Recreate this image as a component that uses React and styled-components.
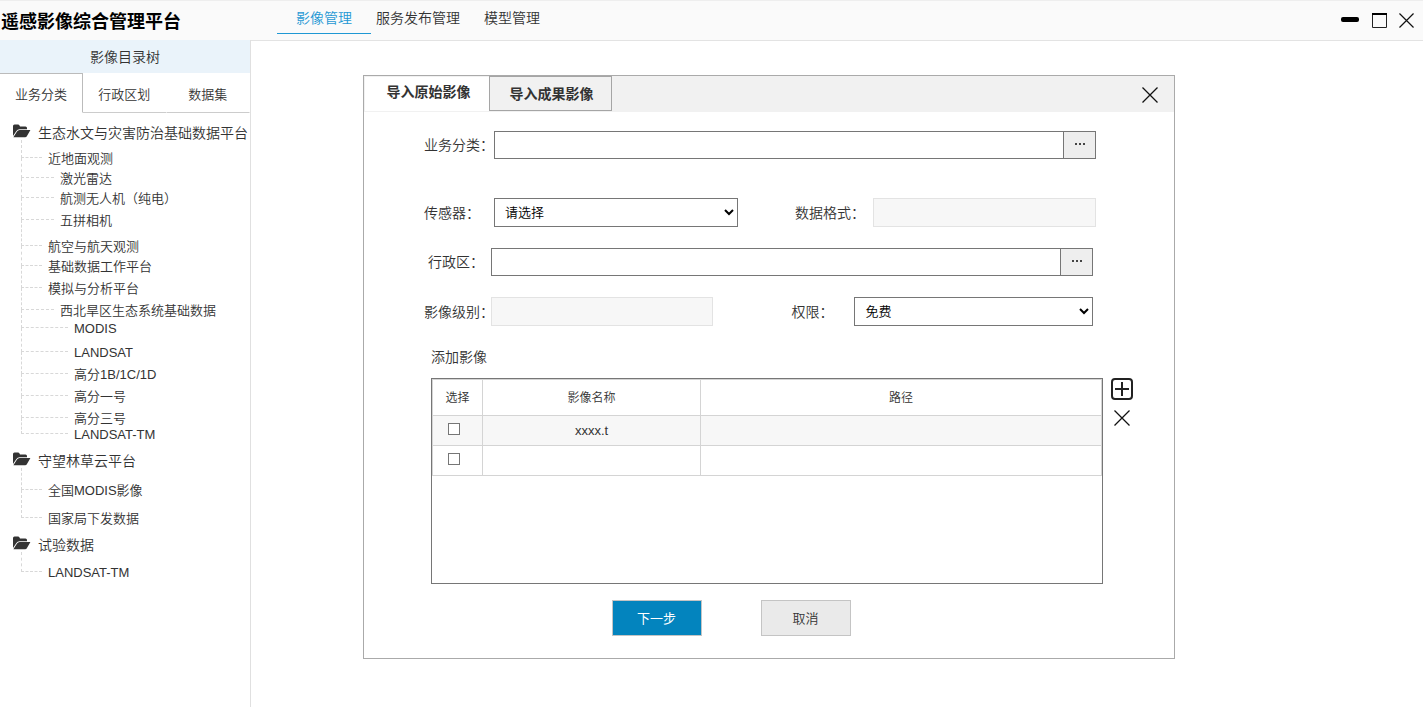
import React, { useState } from 'react';
import styled, { createGlobalStyle } from 'styled-components';

const GlobalStyle = createGlobalStyle`
    * {
        box-sizing: border-box;
    }

    body {
        margin: 0;
        background: #fff;
        color: #333;
        font-family: "Liberation Sans", "Noto Sans CJK SC", sans-serif;
        font-size: 14px;
        font-weight: 350;
        line-height: 20px;
    }

    button, input, select {
        font-family: inherit;
        font-weight: inherit;
        border-radius: 0;
    }
`;

const Page = styled.div`
    display: flex;
    flex-direction: column;
    min-height: 100vh;
`;

const Header = styled.header`
    display: flex;
    align-items: flex-start;
    height: 40px;
    background: #fafafa;
    border-top: 1px solid #eee;
`;

const Title = styled.h1`
    width: 277px;
    margin: 0;
    padding: 9px 0 0 1px;
    color: #000;
    font-size: 18px;
    line-height: 24px;
`;

const Nav = styled.nav`
    display: flex;
    flex: 1;
`;

const NavLink = styled.a`
    height: 33px;
    padding: ${({ $active }) => ($active ? '7px 19px 0' : '7px 12px 0')};
    margin-right: ${({ $active }) => ($active ? '-7px' : '0')};
    border-bottom: 1px solid ${({ $active }) => ($active ? '#1f98d4' : 'transparent')};
    color: ${({ $active }) => ($active ? '#1f98d4' : '#333')};
    text-decoration: none;
`;

const WindowButtons = styled.div`
    display: flex;
    gap: 12px;
    padding: 11px 9px 0 0;
`;

const IconButton = styled.button`
    display: flex;
    align-items: center;
    justify-content: center;
    padding: 0;
    border: 0;
    background: none;
    color: #111;
    cursor: pointer;
`;

const Body = styled.div`
    display: flex;
    flex: 1;
`;

const Sidebar = styled.aside`
    width: 251px;
    flex: none;
    border-right: 1px solid #e0e0e0;
`;

const SidebarTitle = styled.h2`
    margin: 0;
    padding: 7px 0 6px;
    background: #eaf3fa;
    font-size: 14px;
    font-weight: inherit;
    text-align: center;
`;

const SidebarTabs = styled.div`
    display: grid;
    grid-template-columns: 83px 1fr 1fr;
`;

const SidebarTab = styled.button`
    height: 40px;
    padding: 0;
    background: none;
    border: 1px solid transparent;
    border-bottom-color: ${({ $active }) => ($active ? 'transparent' : '#ccc')};
    border-top-color: ${({ $active }) => ($active ? '#bbb' : 'transparent')};
    border-right-color: ${({ $active }) => ($active ? '#bbb' : 'transparent')};
    border-left: 0;
    color: #333;
    font-size: 13px;
`;

const Tree = styled.ul`
    margin: 0;
    padding: 12px 0 0;
    list-style: none;
`;

const Folder = styled.li`
    margin-bottom: 10px;
`;

const FolderName = styled.div`
    display: flex;
    align-items: center;
    height: 16px;
    padding-left: 13px;
    gap: 7px;
    white-space: nowrap;

    svg {
        flex: none;
        margin-bottom: 4px;
    }
`;

const Branches = styled.ul`
    margin: 0;
    padding: 0 0 0 21px;
    list-style: none;
`;

const Leaf = styled.li`
    display: flex;
    gap: 6px;
    padding-top: ${({ $gap }) => $gap}px;
    font-size: 13px;
    line-height: 16px;
    white-space: nowrap;
`;

const lineWidth = { 1: '21px', 2: '33px', 3: '47px' };

const Line = styled.span`
    width: ${({ $level }) => lineWidth[$level]};
    height: ${({ $gap }) => $gap + 16}px;
    margin-top: ${({ $gap }) => -$gap - 9}px;
    border-left: 1px dashed #d8d8d8;
    border-bottom: 1px dashed #d8d8d8;

    ${Leaf}:first-child > & {
        height: ${({ $gap }) => $gap + 8}px;
        margin-top: ${({ $gap }) => -$gap - 1}px;
    }
`;

const Main = styled.main`
    flex: 1;
    min-width: 0;
    padding: 34px 248px 48px 112px;
    border-top: 1px solid #e3e3e3;
`;

const Dialog = styled.section`
    border: 1px solid #aaa;
`;

const DialogHeader = styled.div`
    display: flex;
    align-items: flex-start;
    height: 36px;
    background: #f1f1f1;
`;

const DialogTab = styled.button`
    width: ${({ $active }) => ($active ? '125px' : '123px')};
    height: ${({ $active }) => ($active ? '36px' : '35px')};
    padding: ${({ $active }) => ($active ? '0 0 6px 3px' : '0 0 2px 2px')};
    border: 1px solid ${({ $active }) => ($active ? '#f1f1f1' : '#a5a5a5')};
    border-right-width: ${({ $active }) => ($active ? '0' : '1px')};
    background: ${({ $active }) => ($active ? '#fff' : '#f1f1f1')};
    color: #333;
    font-size: 14px;
    font-weight: 700;
`;

const DialogClose = styled(IconButton)`
    margin: 11px 16px 0 auto;
`;

const Form = styled.form`
    padding: 19px 0 22px;
`;

const Row = styled.div`
    display: grid;
    grid-template-columns: ${({ $columns }) => $columns};
    align-items: center;
    margin-bottom: ${({ $gap }) => $gap || '21px'};
    padding: 0 ${({ $inset }) => ($inset ? '81px' : '78px')} 0 60px;
`;

const Label = styled.label`
    padding-left: ${({ $indent }) => $indent || '0'};
    white-space: nowrap;
`;

const Picker = styled.div`
    display: flex;
    height: 28px;
    border: 1px solid #767676;
`;

const PickerInput = styled.input`
    flex: 1;
    min-width: 0;
    padding: 0 8px;
    border: 0;
    outline: 0;
    font-size: 13px;
`;

const PickerButton = styled.button`
    width: 32px;
    padding: 0;
    border: 0;
    border-left: 1px solid #767676;
    background: #eee;
    color: #333;

    svg {
        display: block;
        margin: 0 auto 2px;
    }
`;

const Select = styled.select`
    width: 100%;
    height: 29px;
    padding: 0 6px;
    border: 1px solid #767676;
    background: #fff;
    color: #000;
    font-size: 13px;
`;

const ReadOnly = styled.input`
    width: 100%;
    height: 29px;
    border: 1px solid #e3e3e3;
    background: #f7f7f7;
`;

const Caption = styled.div`
    padding-left: 67px;
    margin-bottom: 11px;
`;

const ListArea = styled.div`
    display: flex;
    gap: 8px;
    padding: 0 41px 0 67px;
`;

const TableBox = styled.div`
    flex: 1;
    min-height: 206px;
    border: 1px solid #767676;
`;

const Table = styled.table`
    width: 100%;
    table-layout: fixed;
    border-collapse: collapse;
    text-align: center;

    th, td {
        padding: 0;
        border: 1px solid #d4d4d4;
    }

    th {
        height: 36px;
        font-size: 12px;
        font-weight: inherit;
    }

    th:nth-child(1) {
        width: 50px;
    }

    th:nth-child(2) {
        width: 218px;
    }

    td {
        height: 30px;
        font-size: 13px;
    }

    tbody tr:nth-child(odd) {
        background: #f7f7f7;
    }
`;

const Checkbox = styled.input`
    appearance: none;
    display: block;
    width: 12px;
    height: 12px;
    margin: 0 0 3px 15px;
    border: 1px solid #767676;
    background: #fff;

    &:checked {
        background: #0384be;
    }
`;

const ListTools = styled.div`
    display: flex;
    flex-direction: column;
    gap: 10px;
`;

const Actions = styled.div`
    display: flex;
    justify-content: center;
    gap: 59px;
    padding: 16px 76px 0 0;
`;

const ActionButton = styled.button`
    width: 90px;
    height: 36px;
    padding: 0 0 2px;
    border: 1px solid #c4c4c4;
    background: ${({ $primary }) => ($primary ? '#0384be' : '#eaeaea')};
    color: ${({ $primary }) => ($primary ? '#fff' : '#333')};
    font-size: 13px;
    font-weight: ${({ $primary }) => ($primary ? 400 : 'inherit')};
`;

const CrossIcon = ({ size }) => (
    <svg width={size} height={size} viewBox="0 0 16 16" fill="none" stroke="currentColor" strokeWidth="1.3">
        <path d="M0.5 0.5L15.5 15.5M15.5 0.5L0.5 15.5" />
    </svg>
);

const FolderIcon = () => (
    <svg width="18" height="14" viewBox="0 0 18 14" fill="#333">
        <path d="M0 12V2Q0 0.5 1.5 0.5H5Q6 0.5 6.5 1.5L7 2.5H12.5Q14 2.5 14 4V5.2H6.5Q4.5 5.2 3.4 7L0.3 11.6Z" />
        <path d="M6.6 5.9H17.4L14 12Q13.4 13.3 12 13.3H0.4L4 7.6Q5 5.9 6.6 5.9Z" />
    </svg>
);

const DotsIcon = () => (
    <svg width="10" height="2" viewBox="0 0 10 2" fill="#444">
        <rect width="2" height="2" />
        <rect x="4" width="2" height="2" />
        <rect x="8" width="2" height="2" />
    </svg>
);

const folders = [
    {
        name: '生态水文与灾害防治基础数据平台',
        items: [
            ['近地面观测', 1, 10],
            ['激光雷达', 2, 4],
            ['航测无人机（纯电）', 2, 4],
            ['五拼相机', 2, 6],
            ['航空与航天观测', 1, 10],
            ['基础数据工作平台', 1, 4],
            ['模拟与分析平台', 1, 6],
            ['西北旱区生态系统基础数据', 2, 6],
            ['MODIS', 3, 2],
            ['LANDSAT', 3, 8],
            ['高分1B/1C/1D', 3, 6],
            ['高分一号', 3, 6],
            ['高分三号', 3, 6],
            ['LANDSAT-TM', 3, 0],
        ],
    },
    {
        name: '守望林草云平台',
        items: [
            ['全国MODIS影像', 1, 14],
            ['国家局下发数据', 1, 12],
        ],
    },
    {
        name: '试验数据',
        items: [['LANDSAT-TM', 1, 12]],
    },
];

const files = [
    { name: 'xxxx.t', path: '' },
    { name: '', path: '' },
];

const sidebarTabs = ['业务分类', '行政区划', '数据集'];
const dialogTabs = ['导入原始影像', '导入成果影像'];

const App = () => {
    const [sideTab, setSideTab] = useState(0);
    const [dialogTab, setDialogTab] = useState(0);

    return (
        <Page>
            <GlobalStyle />
            <Header>
                <Title>遥感影像综合管理平台</Title>
                <Nav>
                    <NavLink href="#images" $active>影像管理</NavLink>
                    <NavLink href="#services">服务发布管理</NavLink>
                    <NavLink href="#models">模型管理</NavLink>
                </Nav>
                <WindowButtons>
                    <IconButton aria-label="最小化">
                        <svg width="20" height="16" viewBox="0 0 20 16">
                            <rect x="1" y="5" width="18" height="5" rx="2" fill="#000" />
                        </svg>
                    </IconButton>
                    <IconButton aria-label="最大化">
                        <svg width="15" height="16" viewBox="0 0 15 16">
                            <path d="M0.5 1.5V15.5H14.5V1.5" fill="none" stroke="#222" />
                            <rect y="1" width="15" height="2" fill="#000" />
                        </svg>
                    </IconButton>
                    <IconButton aria-label="关闭">
                        <CrossIcon size={15} />
                    </IconButton>
                </WindowButtons>
            </Header>
            <Body>
                <Sidebar>
                    <SidebarTitle>影像目录树</SidebarTitle>
                    <SidebarTabs>
                        {sidebarTabs.map((tab, i) => (
                            <SidebarTab key={tab} $active={i === sideTab} onClick={() => setSideTab(i)}>{tab}</SidebarTab>
                        ))}
                    </SidebarTabs>
                    <Tree>
                        {folders.map((folder) => (
                            <Folder key={folder.name}>
                                <FolderName>
                                    <FolderIcon />
                                    {folder.name}
                                </FolderName>
                                <Branches>
                                    {folder.items.map(([name, level, gap]) => (
                                        <Leaf key={name} $gap={gap}>
                                            <Line $level={level} $gap={gap} />
                                            {name}
                                        </Leaf>
                                    ))}
                                </Branches>
                            </Folder>
                        ))}
                    </Tree>
                </Sidebar>
                <Main>
                    <Dialog>
                        <DialogHeader>
                            {dialogTabs.map((tab, i) => (
                                <DialogTab key={tab} $active={i === dialogTab} onClick={() => setDialogTab(i)}>{tab}</DialogTab>
                            ))}
                            <DialogClose aria-label="关闭">
                                <CrossIcon size={16} />
                            </DialogClose>
                        </DialogHeader>
                        <Form onSubmit={(e) => e.preventDefault()}>
                            <Row $columns="70px 1fr" $gap="39px">
                                <Label htmlFor="category">业务分类：</Label>
                                <Picker>
                                    <PickerInput id="category" />
                                    <PickerButton type="button" aria-label="选择业务分类"><DotsIcon /></PickerButton>
                                </Picker>
                            </Row>
                            <Row $columns="70px 244fr 135px 223fr">
                                <Label htmlFor="sensor">传感器：</Label>
                                <Select id="sensor">
                                    <option>请选择</option>
                                </Select>
                                <Label htmlFor="format" $indent="57px">数据格式：</Label>
                                <ReadOnly id="format" readOnly />
                            </Row>
                            <Row $columns="67px 1fr" $inset>
                                <Label htmlFor="region" $indent="4px">行政区：</Label>
                                <Picker>
                                    <PickerInput id="region" />
                                    <PickerButton type="button" aria-label="选择行政区"><DotsIcon /></PickerButton>
                                </Picker>
                            </Row>
                            <Row $columns="67px 222fr 141px 238fr" $inset>
                                <Label htmlFor="level">影像级别：</Label>
                                <ReadOnly id="level" readOnly />
                                <Label htmlFor="access" $indent="78px">权限：</Label>
                                <Select id="access">
                                    <option>免费</option>
                                </Select>
                            </Row>
                            <Caption>添加影像</Caption>
                            <ListArea>
                                <TableBox>
                                    <Table>
                                        <thead>
                                            <tr>
                                                <th>选择</th>
                                                <th>影像名称</th>
                                                <th>路径</th>
                                            </tr>
                                        </thead>
                                        <tbody>
                                            {files.map((file, i) => (
                                                <tr key={i}>
                                                    <td><Checkbox type="checkbox" aria-label="选择" /></td>
                                                    <td>{file.name}</td>
                                                    <td>{file.path}</td>
                                                </tr>
                                            ))}
                                        </tbody>
                                    </Table>
                                </TableBox>
                                <ListTools>
                                    <IconButton type="button" aria-label="添加">
                                        <svg width="22" height="22" viewBox="0 0 22 22" fill="none" stroke="#222" strokeWidth="2">
                                            <rect x="1" y="1" width="20" height="20" rx="3" />
                                            <path d="M4 11H18M11 4V18" />
                                        </svg>
                                    </IconButton>
                                    <IconButton type="button" aria-label="删除">
                                        <CrossIcon size={16} />
                                    </IconButton>
                                </ListTools>
                            </ListArea>
                            <Actions>
                                <ActionButton type="submit" $primary>下一步</ActionButton>
                                <ActionButton type="button">取消</ActionButton>
                            </Actions>
                        </Form>
                    </Dialog>
                </Main>
            </Body>
        </Page>
    );
};

export default App;
